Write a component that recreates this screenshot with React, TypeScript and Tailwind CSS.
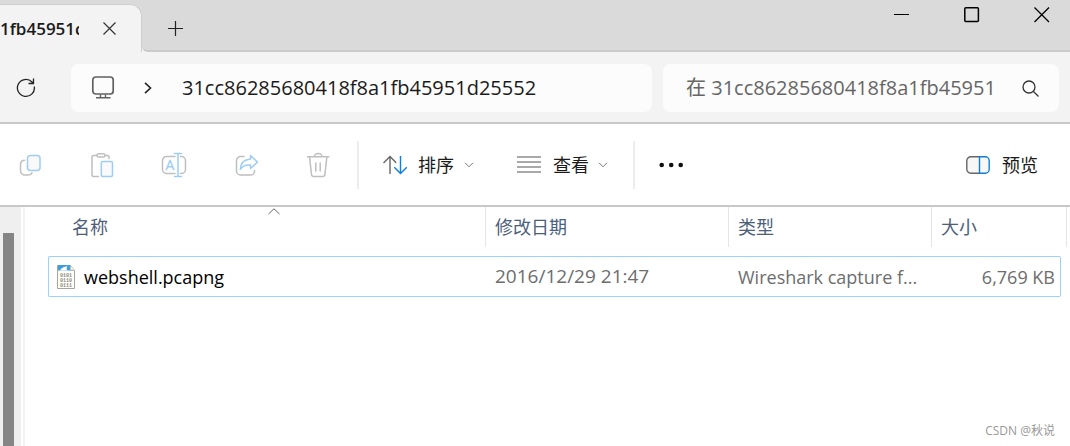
import type { ReactNode } from 'react';

const FILES = [
  {
    name: 'webshell.pcapng',
    modified: '2016/12/29 21:47',
    type: 'Wireshark capture f...',
    size: '6,769 KB',
  },
];

const GRAY = '#bfbfbf';
const BLUE = '#9fcdf2';

function ToolIcon({ children }: { children: ReactNode }) {
  return (
    <svg width="28" height="28" viewBox="0 0 28 28" fill="none" strokeWidth="1.5" strokeLinecap="round" strokeLinejoin="round">
      {children}
    </svg>
  );
}

const TOOLS = [
  {
    label: 'Copy',
    icon: (
      <ToolIcon>
        <path stroke={GRAY} d="M8.500 9.200a4 4 0 0 0-4 4v6.300a4.500 4.500 0 0 0 4.500 4.500H12q3 0 4-2.300" />
        <rect stroke={BLUE} fill="#f9f9f9" x="11.500" y="4.500" width="12.500" height="15" rx="3" />
      </ToolIcon>
    ),
  },
  {
    label: 'Paste',
    icon: (
      <ToolIcon>
        <path stroke={GRAY} d="M9 4.500H5.500a1.500 1.500 0 0 0-1.500 1.500V24a1.500 1.500 0 0 0 1.500 1.500H10.500M17 4.500h2.500a1.500 1.500 0 0 1 1.500 1.500V7.500" />
        <rect stroke={GRAY} x="9" y="2.700" width="8" height="3.300" rx="1.600" />
        <rect stroke={BLUE} fill="#f9f9f9" x="13.300" y="10.500" width="11.200" height="15" rx="1.500" />
      </ToolIcon>
    ),
  },
  {
    label: 'Rename',
    icon: (
      <ToolIcon>
        <path stroke={GRAY} d="M15 5.500H6.500a4 4 0 0 0-4 4v9a4 4 0 0 0 4 4H15M20.500 5.500h1a4 4 0 0 1 4 4v9a4 4 0 0 1-4 4h-1" />
        <path stroke={BLUE} d="M14.500 2.500h7M14.500 25.500h7M18 2.500v23" />
        <text x="5.500" y="18.500" fontSize="14" fill={BLUE} stroke={BLUE} strokeWidth=".3" className="font-['Open_Sans',sans-serif]">A</text>
      </ToolIcon>
    ),
  },
  {
    label: 'Share',
    icon: (
      <ToolIcon>
        <path stroke={GRAY} d="M12 5.500H8.500a4 4 0 0 0-4 4V20a4 4 0 0 0 4 4h10a4 4 0 0 0 4-3.500V19.500" />
        <path stroke={BLUE} d="M18.500 4.500l7 6.600-7 6.400v-3.500q-7-.6-10.200 4.300Q8.800 9 18.500 8z" />
      </ToolIcon>
    ),
  },
  {
    label: 'Delete',
    icon: (
      <ToolIcon>
        <path stroke={GRAY} d="M3.500 5.700H24.800M10.500 5.500a3.700 3 0 0 1 7.400 0M5.500 5.700l2 17.800a2.200 2.200 0 0 0 2.200 2h9a2.200 2.200 0 0 0 2.200-2l2-17.800M11.800 12v8M16.200 12v8" />
      </ToolIcon>
    ),
  },
];

function ChevronDown() {
  return (
    <svg width="10" height="6" viewBox="0 0 10 6" fill="none" stroke="#777" strokeWidth="1">
      <path d="M1 .8l4 4 4-4" />
    </svg>
  );
}

function FileIcon() {
  return (
    <svg width="18" height="24" viewBox="0 0 18 24">
      <path d="M.5.500H13.500L17.500 5.500V23.500H.500z" fill="#fffff6" stroke="#a3a89c" />
      <path d="M1 0H13L16 5.500H1z" fill="#3a9fdc" />
      <path d="M3 5.500Q5 1.500 10.500 1.200Q8.500 3.500 10 5.500z" fill="#fff" />
      <path d="M13.200.500V5.300H17.500" fill="#f6f6ee" stroke="#a3a89c" strokeWidth=".8" />
      <g fontSize="5" fontWeight="700" fill="#8a8a8a" className="font-['Liberation_Mono',monospace]">
        <text x="3" y="11.500">0101</text>
        <text x="3" y="16.500">0110</text>
        <text x="3" y="21.500">0111</text>
      </g>
    </svg>
  );
}

function TitleBar() {
  return (
    <header className="flex h-13">
      <div className="bg-[#dadada] pt-1">
        <div className="flex h-12 items-center rounded-tr-xl border-t border-r border-[#cecece] bg-[#f3f3f3] pr-[25px]">
          <span className="w-[79px] overflow-hidden text-[17px] font-semibold whitespace-nowrap">1fb45951d</span>
          <button aria-label="Close tab" className="ml-6">
            <svg width="13" height="13" viewBox="0 0 13 13" stroke="#333" strokeWidth="1.2">
              <path d="M.5.500l12 12M12.500.500l-12 12" />
            </svg>
          </button>
        </div>
      </div>
      <div className="flex flex-1 bg-[#f3f3f3]">
        <div className="flex flex-1 items-start justify-between rounded-bl-md border-b-2 border-[#cbcbcb] bg-[#dadada] pr-5 pl-[26px]">
          <button aria-label="New tab" className="mt-[21px]">
            <svg width="15" height="15" viewBox="0 0 15 15" stroke="#222" strokeWidth="1.200">
              <path d="M7.500 0v15M0 7.500h15" />
            </svg>
          </button>
          <div className="mt-[7px] flex gap-[54px]">
            <button aria-label="Minimize">
              <svg width="16" height="16" viewBox="0 0 16 16" stroke="#000">
                <path d="M0 7.500h15" />
              </svg>
            </button>
            <button aria-label="Maximize">
              <svg width="16" height="16" viewBox="0 0 16 16" fill="none" stroke="#000" strokeWidth="1.500">
                <rect x=".8" y=".8" width="13.600" height="13.600" rx="1" />
              </svg>
            </button>
            <button aria-label="Close">
              <svg width="16" height="16" viewBox="0 0 16 16" stroke="#000" strokeWidth="1.300">
                <path d="M.5 .5l14.500 14.500M15 .5l-14.500 14.500" />
              </svg>
            </button>
          </div>
        </div>
      </div>
    </header>
  );
}

function AddressBar() {
  return (
    <div className="flex items-center border-b-2 border-[#c8c8c8] bg-[#f3f3f3] pt-3 pr-[11px] pb-[10px] pl-4 text-xl">
      <button aria-label="Refresh">
        <svg width="20" height="20" viewBox="0 0 20 20" fill="none" stroke="#222" strokeWidth="1.300">
          <path d="M18.300 8.500A8.500 8.500 0 1 1 16 4l1.500 1.500M17.500.500v5h-5" />
        </svg>
      </button>
      <div className="ml-[35px] grid min-w-0 flex-1 grid-cols-[581fr_396fr] gap-[11px]">
        <div className="flex h-12 min-w-0 items-center rounded-lg bg-[#fcfcfc] pl-5">
          <svg width="24" height="24" viewBox="0 0 24 24" fill="none" stroke="#606060" strokeWidth="1.700" className="shrink-0">
            <rect x="1.800" y="1" width="20.400" height="17" rx="3" />
            <path d="M9.500 18.500v3M14.500 18.500v3M5 21.700h14.500" strokeWidth="1.400" />
          </svg>
          <svg width="8" height="12" viewBox="0 0 8 12" fill="none" stroke="#222" strokeWidth="1.600" className="ml-[29px] shrink-0">
            <path d="M1 .8l5.500 5.200L1 11.200" />
          </svg>
          <input aria-label="Address" defaultValue="31cc86285680418f8a1fb45951d25552" className="ml-[30px] min-w-0 flex-1 bg-transparent outline-none" />
        </div>
        <div className="flex h-12 min-w-0 items-center rounded-lg bg-[#fcfcfc] pr-5 pl-[23px]">
          <input
            type="search"
            aria-label="Search"
            placeholder="在 31cc86285680418f8a1fb45951"
            className="min-w-0 flex-1 bg-transparent outline-none placeholder:text-[#666]"
          />
          <button aria-label="Start search" className="ml-2">
            <svg width="17" height="17" viewBox="0 0 17 17" fill="none" stroke="#333" strokeWidth="1.300">
              <circle cx="7" cy="7" r="6" />
              <path d="M11.500 11.500l5 5" />
            </svg>
          </button>
        </div>
      </div>
    </div>
  );
}

function Toolbar() {
  return (
    <div className="flex h-[83px] items-center border-b-2 border-[#c8c8c8] bg-white pr-8 pl-4 text-lg">
      <div className="flex gap-11">
        {TOOLS.map((tool) => (
          <button key={tool.label} aria-label={tool.label} disabled>
            {tool.icon}
          </button>
        ))}
      </div>
      <div className="ml-[25px] h-12 w-0.5 bg-[#ededed]" />
      <button className="ml-[23px] flex items-center">
        <svg width="26" height="20" viewBox="0 0 26 20" fill="none" strokeWidth="1.400">
          <path stroke="#666" d="M8 19V1.500M1.500 8L8 1.500l6.200 6.200" />
          <path stroke="#0f7fd8" d="M18.500 1v17.500M12.300 12.300l6.200 6.200 6.300-6.200" />
        </svg>
        <span className="mr-[10px] ml-[10px]">排序</span>
        <ChevronDown />
      </button>
      <button className="ml-[43px] flex items-center">
        <svg width="24" height="17" viewBox="0 0 24 17" stroke="#555" strokeWidth="1.200">
          <path d="M0 1h24M0 6h24M0 11h24M0 16h24" />
        </svg>
        <span className="mr-[9px] ml-3">查看</span>
        <ChevronDown />
      </button>
      <div className="ml-[25px] h-12 w-0.5 bg-[#ededed]" />
      <button aria-label="More" className="ml-6">
        <svg width="25" height="6" viewBox="0 0 25 6" fill="#111">
          <circle cx="2.700" cy="3" r="2.300" />
          <circle cx="12.200" cy="3" r="2.300" />
          <circle cx="21.700" cy="3" r="2.300" />
        </svg>
      </button>
      <button className="ml-auto flex items-center gap-3">
        <svg width="24" height="18" viewBox="0 0 24 18" fill="#f7f7f7" strokeWidth="1.400">
          <path stroke="#666" d="M13.500.800H4.800a4 4 0 0 0-4 4v8.400a4 4 0 0 0 4 4h8.700" />
          <path stroke="#0f7fd8" d="M13.500.800h5.700a4 4 0 0 1 4 4v8.400a4 4 0 0 1-4 4h-5.700z" />
        </svg>
        预览
      </button>
    </div>
  );
}

function FileTable() {
  return (
    <table className="w-full table-fixed border-separate border-spacing-0 text-lg">
      <colgroup>
        <col />
        <col className="w-[243px]" />
        <col className="w-[203px]" />
        <col className="w-[129px]" />
        <col className="w-[6px]" />
      </colgroup>
      <thead className="text-left text-[#4c607a]">
        <tr>
          <th className="p-0 pb-[9px] font-normal">
            <div className="relative h-10 border-r border-[#e5e5e5] pl-6 leading-10">
              名称
              <svg width="12" height="7" viewBox="0 0 12 7" fill="none" stroke="#666" className="absolute top-px left-1/2 ml-px">
                <path d="M.5 6L6 .8 11.500 6" />
              </svg>
            </div>
          </th>
          <th className="p-0 pb-[9px] font-normal">
            <div className="h-10 border-r border-[#e5e5e5] pl-[9px] leading-10">修改日期</div>
          </th>
          <th className="p-0 pb-[9px] font-normal">
            <div className="h-10 border-r border-[#e5e5e5] pl-[9px] leading-10">类型</div>
          </th>
          <th colSpan={2} className="p-0 pb-[9px] font-normal">
            <div className="h-10 border-r border-[#e5e5e5] pl-[9px] leading-10">大小</div>
          </th>
        </tr>
      </thead>
      <tbody className="text-[#6d6d6d]">
        {FILES.map((file) => (
          <tr key={file.name} className="h-[41px] whitespace-nowrap">
            <td className="rounded-l-xs border-y border-l border-[#99d1ff] p-0 pl-2 text-black">
              <div className="flex items-center gap-[9px]">
                <FileIcon />
                {file.name}
              </div>
            </td>
            <td className="border-y border-[#99d1ff] p-0 pl-[9px] text-[19px]">{file.modified}</td>
            <td className="border-y border-[#99d1ff] p-0 pl-[9px]">{file.type}</td>
            <td className="rounded-r-xs border-y border-r border-[#99d1ff] p-0 pr-[5px] text-right">{file.size}</td>
            <td className="p-0" />
          </tr>
        ))}
      </tbody>
    </table>
  );
}

export default function App() {
  return (
    <div className="relative flex min-h-screen flex-col bg-white font-['Open_Sans','Noto_Sans_CJK_SC',sans-serif] text-[#1b1b1b]">
      <TitleBar />
      <AddressBar />
      <Toolbar />
      <main className="flex flex-1">
        <div className="w-[21px] bg-[#efefef] pt-[26px] pr-[7px] pl-[3px]">
          <div className="h-full bg-[#858585]" />
        </div>
        <div className="ml-0.5 w-0.5 bg-[#f3f3f3]" />
        <div className="flex-1 pr-[3px] pl-[23px]">
          <FileTable />
        </div>
      </main>
      <footer className="absolute right-[15px] bottom-[7px] text-xs leading-4 text-[#999]">CSDN @秋说</footer>
    </div>
  );
}
